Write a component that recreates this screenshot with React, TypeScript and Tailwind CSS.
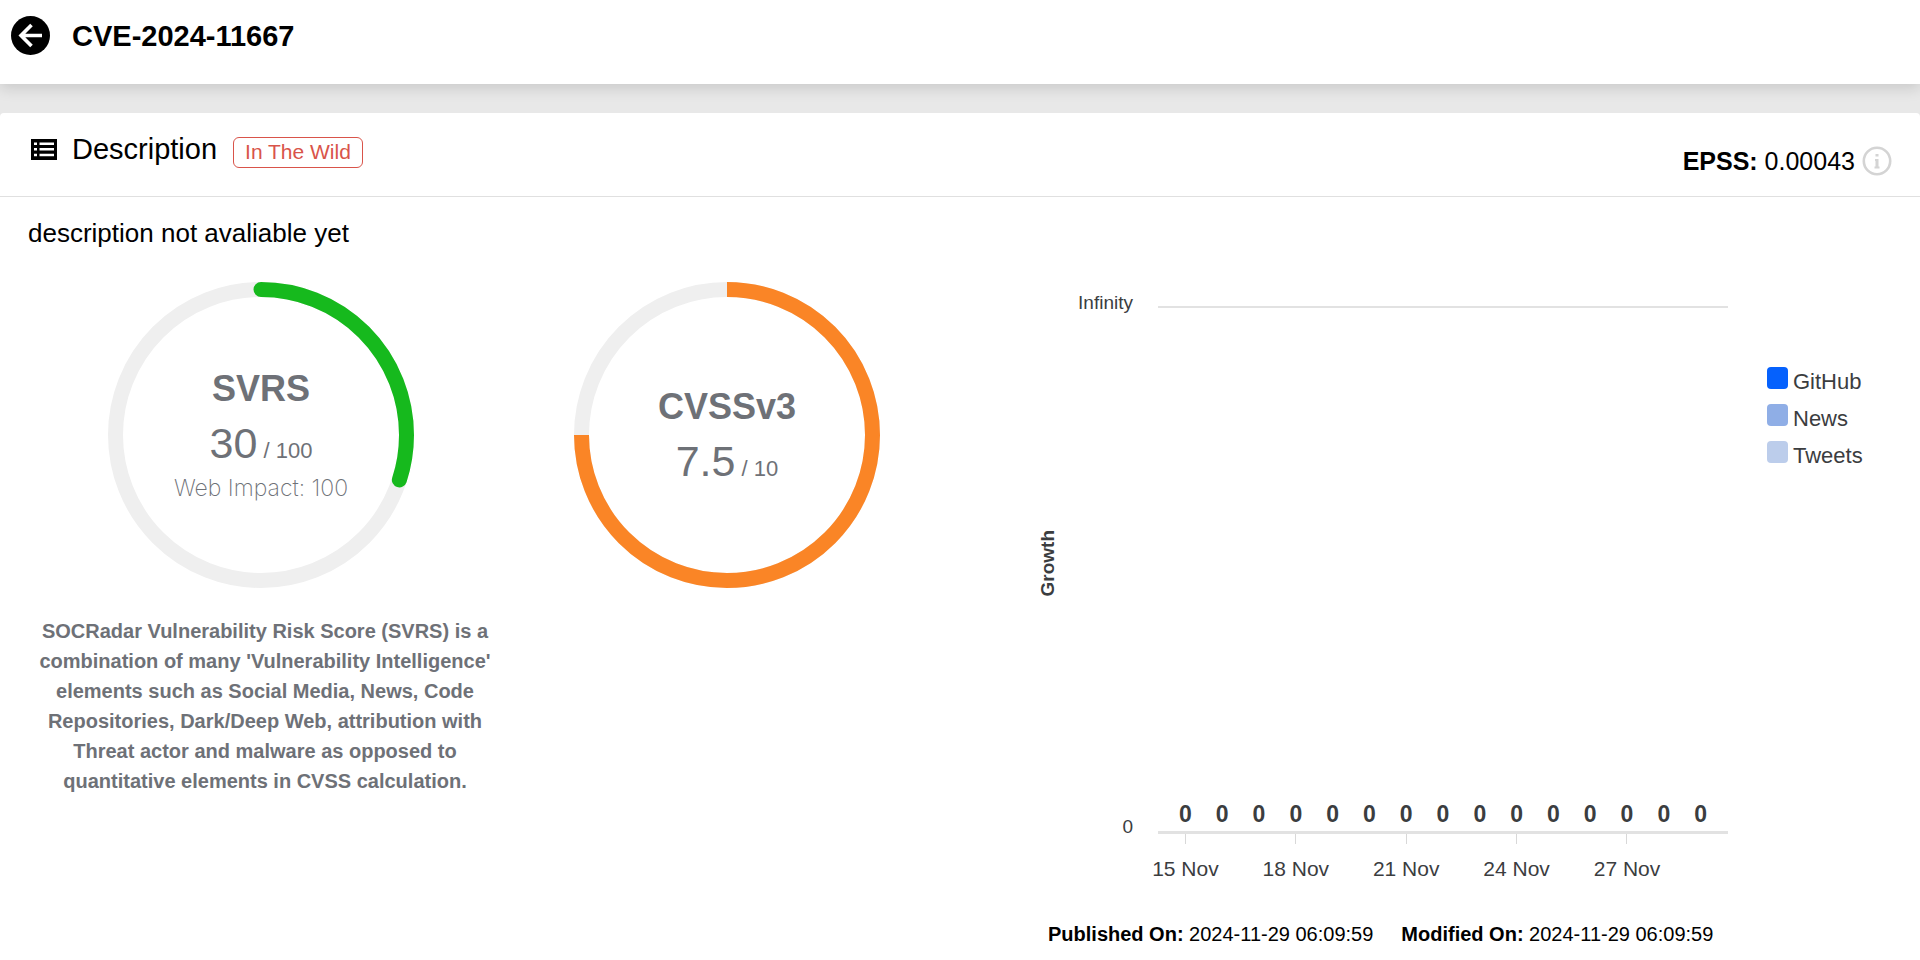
const FONT = "font-['Liberation_Sans',Arial,sans-serif]";

const LEGEND = [
  { label: "GitHub", color: "bg-[#0561fd]" },
  { label: "News", color: "bg-[#8faee6]" },
  { label: "Tweets", color: "bg-[#bccdeb]" },
];

const GROWTH = Array.from({ length: 15 }, (_, i) => ({ day: 15 + i, value: 0 }));

function BackIcon() {
  return (
    <svg viewBox="0 0 39 39" className="size-[39px]" fill="none" aria-hidden="true">
      <circle cx="19.5" cy="19.5" r="19.5" fill="#000" />
      <path d="M20.5 9 10 19.5l10.5 10.5M10.5 19.5H31" stroke="#fff" strokeWidth="3.6" />
    </svg>
  );
}

function ListIcon() {
  return (
    <svg viewBox="0 0 26 21" className="w-[26px] h-[21px]" aria-hidden="true">
      <path d="M0 0h26v21H0z" />
      <path d="M3 3.500h3v2.500H3zM8.500 3.500H23v2.500H8.500zM3 9h3v2.500H3zM8.500 9H23v2.500H8.500zM3 14.700h3v2.500H3zM8.500 14.700H23v2.500H8.500z" fill="#fff" />
    </svg>
  );
}

function InfoIcon() {
  return (
    <svg viewBox="0 0 30 30" className="size-[30px]" fill="none" aria-hidden="true">
      <circle cx="15" cy="15" r="13.2" stroke="#d4d4d4" strokeWidth="2.6" />
      <path d="M13.500 8h3v2.500h-3zM13 13h3.500v7.500h1V22.500h-5V20.500h1V15h-.5z" fill="#d4d4d4" />
    </svg>
  );
}

interface GaugeProps {
  title: string;
  value: string;
  max: number;
  color: string;
  rounded?: boolean;
  note?: string;
}

function Gauge({ title, value, max, color, rounded, note }: GaugeProps) {
  const ratio = Number(value) / max;
  return (
    <div className="relative size-[306px] mx-auto">
      <svg viewBox="0 0 306 306" className="size-full -rotate-90" fill="none" strokeWidth="15" aria-hidden="true">
        <circle cx="153" cy="153" r="145.5" stroke="#efefef" />
        <circle
          cx="153"
          cy="153"
          r="145.5"
          stroke={color}
          pathLength="100"
          strokeDasharray={`${ratio * 100} 100`}
          strokeLinecap={rounded ? "round" : "butt"}
        />
      </svg>
      <div className="absolute inset-0 pt-[6px] flex flex-col items-center justify-center text-[#6e7177]">
        <h3 className="text-4xl leading-[54px] font-bold">{title}</h3>
        <p className="text-[43px] leading-[54px]">
          {value}
          <span className="text-[22px]"> / {max}</span>
        </p>
        {note && <p className="-mt-1 pb-3 font-[Inter,sans-serif] font-extralight text-[23px] leading-7">{note}</p>}
      </div>
    </div>
  );
}

function GrowthChart() {
  return (
    <div className="flex items-start pl-[77px] pt-2 text-[#3b3d3f]">
      <div className="w-[22px] h-[547px] flex items-center justify-center">
        <span className="[writing-mode:vertical-rl] rotate-180 text-[19px] leading-[22px] font-bold">Growth</span>
      </div>
      <div className="w-[99px] h-[549px] pt-px pr-[25px] flex flex-col justify-between text-right text-[19px] leading-6">
        <span>Infinity</span>
        <span>0</span>
      </div>
      <div className="flex-1 pt-4">
        <div className="h-[528px] px-[9px] pb-[3px] grid grid-cols-15 items-end border-t-2 border-b-3 border-[#e2e2e2] text-center text-[23px] leading-7 font-bold">
          {GROWTH.map((g) => (
            <span key={g.day}>{g.value}</span>
          ))}
        </div>
        <div className="px-[9px] grid grid-cols-15">
          {GROWTH.map((g, i) => (
            <div key={g.day} className="w-0 mx-auto flex flex-col items-center gap-[11px]">
              {i % 3 === 0 && (
                <>
                  <span className="w-px h-[10px] bg-[#d8d8d8]" />
                  <span className="text-[21px] leading-7 whitespace-nowrap">{g.day} Nov</span>
                </>
              )}
            </div>
          ))}
        </div>
      </div>
      <ul className="w-[125px] ml-[39px] mt-[77px] flex flex-col gap-[15px]">
        {LEGEND.map((item) => (
          <li key={item.label} className="h-[22px] flex items-start gap-[5px] text-[22px] leading-[30px]">
            <span className={`w-[21px] h-[22px] rounded ${item.color}`} />
            {item.label}
          </li>
        ))}
      </ul>
    </div>
  );
}

export default function App() {
  return (
    <div className={`min-h-screen flex flex-col bg-[#e8e8e8] text-black ${FONT}`}>
      <header className="relative z-10 bg-white shadow-[0_4px_14px_rgba(0,0,0,0.14)] pt-4 pb-[29px] pl-[11px] flex items-center gap-[22px]">
        <button type="button" aria-label="Back" className="shrink-0">
          <BackIcon />
        </button>
        <h1 className="pt-px text-[29px] leading-10 -my-px font-bold">CVE-2024-11667</h1>
      </header>

      <main className="mt-[29px] flex-1 bg-white rounded-t-sm">
        <div className="h-[84px] border-b border-[#e0e0e0] pl-[31px] pr-7 flex justify-between">
          <div className="pt-[18px] flex items-start">
            <div className="h-9 flex items-center gap-[15px]">
              <ListIcon />
              <h2 className="text-[29px] leading-9">Description</h2>
            </div>
            <span className="ml-4 mt-[6px] h-[31px] px-[11px] border border-[#d9544a] rounded-md text-[21px] leading-7 text-[#d9544a]">
              In The Wild
            </span>
          </div>
          <div className="h-8 mt-8 flex items-center gap-[7px] text-[25px] leading-8">
            <p>
              <strong>EPSS:</strong> 0.00043
            </p>
            <button type="button" aria-label="About EPSS">
              <InfoIcon />
            </button>
          </div>
        </div>

        <div className="px-7 pt-[21px] pb-3">
          <p className="text-[26px] leading-[30px]">description not avaliable yet</p>
          <div className="mt-[34px] grid grid-cols-2">
            <div className="grid grid-cols-2 items-start">
              <section>
                <Gauge title="SVRS" value="30" max={100} color="#16b91d" rounded note="Web Impact: 100" />
                <p className="mt-7 pl-2 text-center text-[20px] leading-[30px] font-bold text-[#6e7177]">
                  SOCRadar Vulnerability Risk Score (SVRS) is a combination of many 'Vulnerability Intelligence' elements
                  such as Social Media, News, Code Repositories, Dark/Deep Web, attribution with Threat actor and malware
                  as opposed to quantitative elements in CVSS calculation.
                </p>
              </section>
              <Gauge title="CVSSv3" value="7.5" max={10} color="#fa8526" />
            </div>
            <section>
              <GrowthChart />
              <div className="mt-[39px] pl-[88px] flex gap-7 text-[20px] leading-6">
                <p>
                  <strong>Published On:</strong> 2024-11-29 06:09:59
                </p>
                <p>
                  <strong>Modified On:</strong> 2024-11-29 06:09:59
                </p>
              </div>
            </section>
          </div>
        </div>
      </main>
    </div>
  );
}
